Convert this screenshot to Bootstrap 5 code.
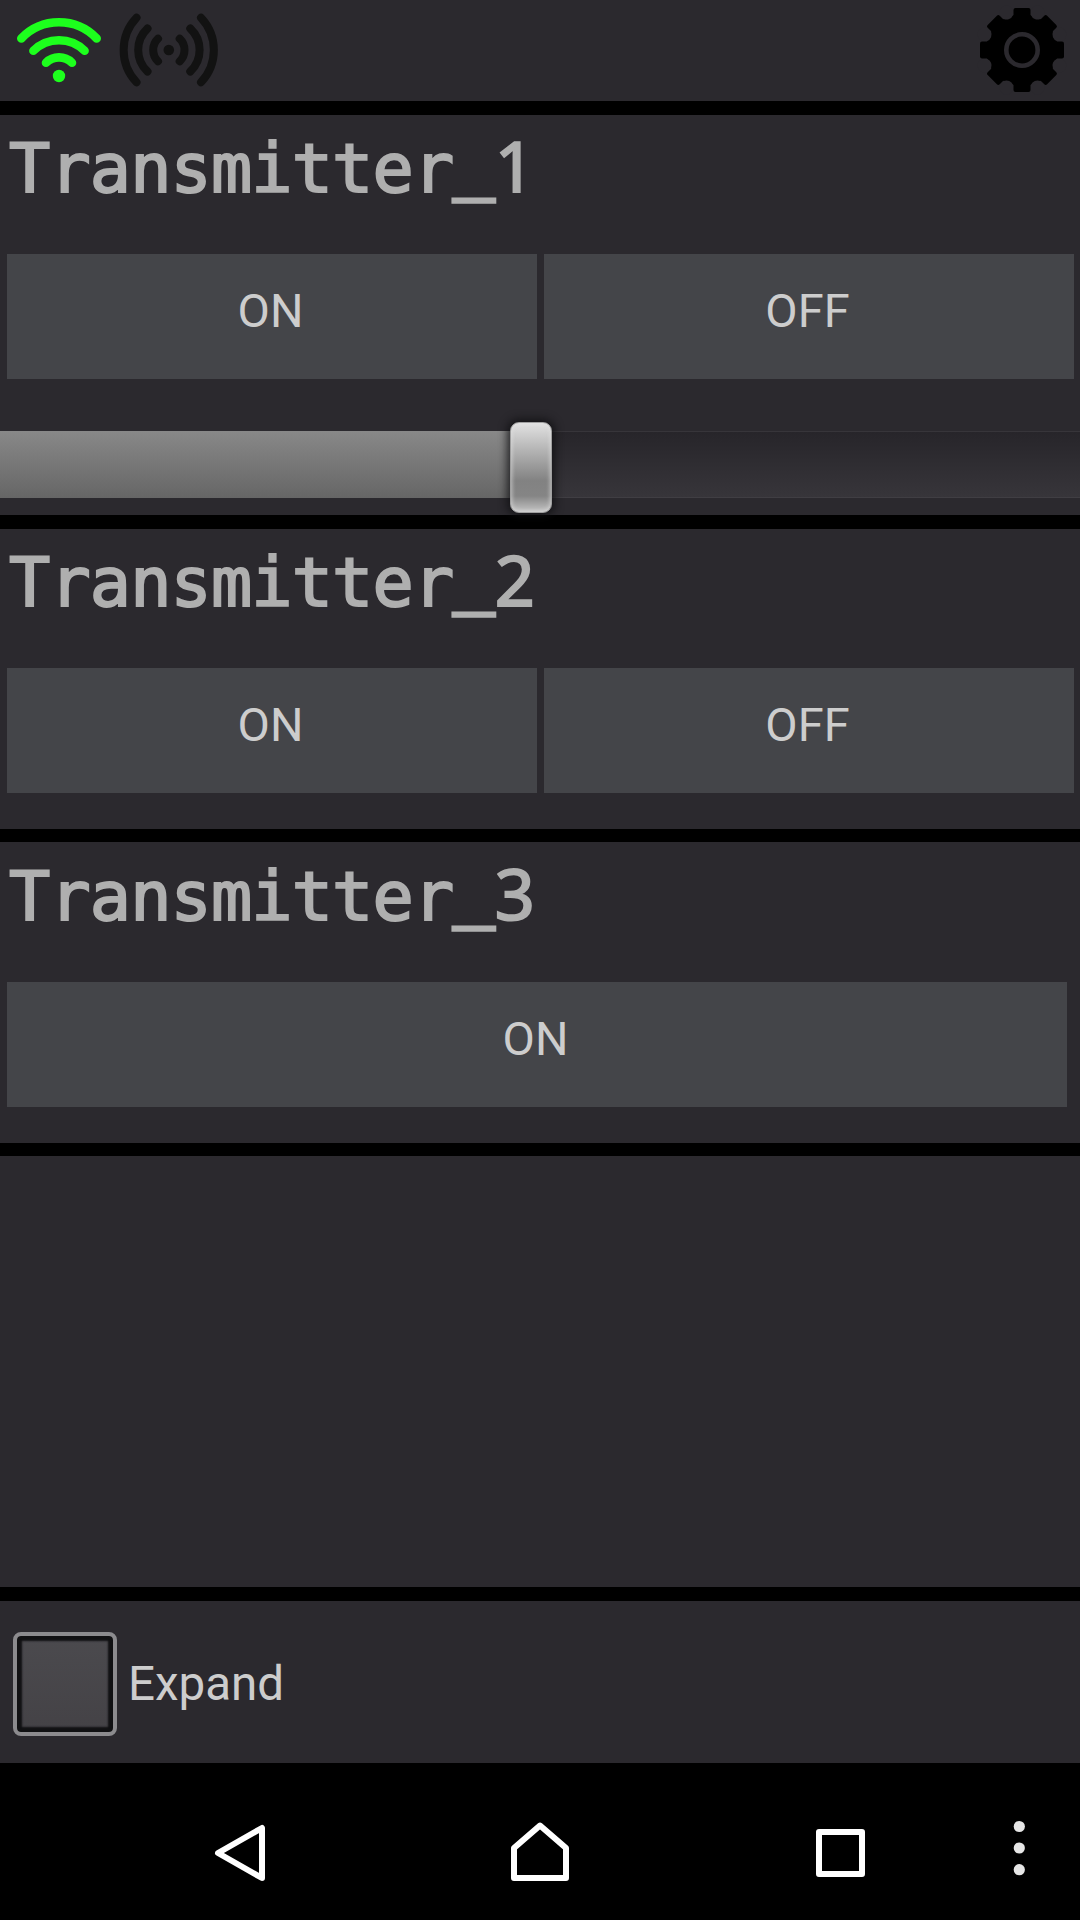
<!DOCTYPE html>
<html lang="en">
<head>
<meta charset="utf-8">
<meta name="viewport" content="width=device-width, initial-scale=1">
<title>Transmitters</title>
<link href="https://cdn.jsdelivr.net/npm/bootstrap@5.3.0/dist/css/bootstrap.min.css" rel="stylesheet">
<style>
  body { background: #000; font-family: Roboto, "Liberation Sans", sans-serif; color: #cdcdcd; }
  .screen { width: 1080px; height: 1920px; }
  .pane { background: #2b292e; flex: none; margin-bottom: 14px; }
  .topbar { height: 101px; }
  .unit { height: 300px; }
  .unit-dim { height: 400px; }
  .unit-last { height: 301px; margin-top: -1px; margin-bottom: 13px; }
  .blank { height: 431px; }
  .unit-name { height: 139px; padding: 19px 0 0 9px; margin: 0; font: 400 68.5px/68px "DejaVu Sans Mono", monospace; letter-spacing: -.85px;
    color: #afafaf; -webkit-text-stroke: 2px #afafaf; white-space: nowrap; }
  .unit-last .unit-name { height: 140px; padding-top: 20px; }
  .unit-name .us { display: inline-block; vertical-align: 6px; line-height: 1px; -webkit-text-stroke-width: 3.6px; }
  .unit-name .dg { font-family: "Noto Sans", sans-serif; font-size: 70px; font-weight: 400; line-height: 1px; padding-left: 1px; }
  .keys { padding: 0 6px 0 7px; gap: 7px; }
  .keys-wide { padding-right: 13px; }
  .key { flex: 1 1 0; height: 125px; border: 0; border-radius: 0; background: #444549; color: #cdcdcd; font-size: 47px; line-height: 56px; padding: 2px 3px 13px 0; }
  .track { height: 67px; margin-top: 52px; background: linear-gradient(#27252a, #37353a); border-top: 1px solid #37353a; border-bottom: 1px solid #403e43; }
  .fill { height: 67px; margin-top: -1px; background: linear-gradient(#888, #666); }
  .thumb { left: 510px; top: -10px; width: 42px; height: 91px; border-radius: 9px; border: 1px solid #a0a0a0;
    background: linear-gradient(#e2e2e2, #b5b5b5 30%, #828282 65%, #858585 82%, #c5c5c5);
    box-shadow: inset 0 0 4px 1px rgba(225,225,225,.65), 0 0 9px 3px rgba(15,15,17,.8); }
  .foot { height: 162px; padding-left: 13px; margin: 0; }
  .tick { appearance: none; width: 104px; height: 104px; margin: 4px 11px 0 0; border: 4px solid #8c8b8e; border-radius: 8px;
    background: linear-gradient(#4b4a4e, #444246); box-shadow: inset 0 0 2px 5px #111113; }
  .foot-label { font-size: 47.5px; line-height: 56px; padding-top: 4px; }
  .sysnav { height: 157px; }
</style>
</head>
<body>
<main class="screen d-flex flex-column overflow-hidden">
  <header class="pane topbar d-flex justify-content-between">
    <svg width="240" height="101" fill="none" stroke-linecap="round" aria-label="Connection status">
      <g stroke="#1dff1d" stroke-width="8.6">
        <path d="M21.3 38.5A52 52 0 0 1 96.7 38.5M33.4 50.7A36.5 36.5 0 0 1 84.6 50.7M46 62.7A18.5 18.5 0 0 1 72 62.7"/>
        <circle cx="59" cy="76" r="6.2" fill="#1dff1d" stroke="none"/>
      </g>
      <g stroke="#121212" stroke-width="8">
        <path d="M136.500 17.700A47 47 0 0 0 136.500 82.300M147.500 28.500A29.500 29.500 0 0 0 147.500 71.500M158 38.700A15.700 15.700 0 0 0 158 61.300"/>
        <path d="M201 17.700A47 47 0 0 1 201 82.300M190.300 28.500A29.500 29.500 0 0 1 190.300 71.500M179.700 38.700A15.700 15.700 0 0 1 179.700 61.300"/>
        <circle cx="168.800" cy="50" r="5.300" fill="#121212" stroke="none"/>
      </g>
    </svg>
    <svg width="116" height="101" viewBox="-58 -50 116 101" aria-label="Settings">
      <defs>
        <rect id="tooth" x="-8.500" y="-42" width="17" height="30" rx="2"/>
        <circle id="notch" cx="0" cy="-40.500" r="7"/>
      </defs>
      <circle r="36"/>
      <g fill="#2b292e">
        <use href="#notch" transform="rotate(22.5)"/><use href="#notch" transform="rotate(67.5)"/>
        <use href="#notch" transform="rotate(112.5)"/><use href="#notch" transform="rotate(157.5)"/>
        <use href="#notch" transform="rotate(202.5)"/><use href="#notch" transform="rotate(247.5)"/>
        <use href="#notch" transform="rotate(292.5)"/><use href="#notch" transform="rotate(337.5)"/>
      </g>
      <use href="#tooth"/><use href="#tooth" transform="rotate(45)"/><use href="#tooth" transform="rotate(90)"/>
      <use href="#tooth" transform="rotate(135)"/><use href="#tooth" transform="rotate(180)"/><use href="#tooth" transform="rotate(225)"/>
      <use href="#tooth" transform="rotate(270)"/><use href="#tooth" transform="rotate(315)"/>
      <circle r="15.700" fill="none" stroke="#2b292e" stroke-width="4.600"/>
    </svg>
  </header>

  <section class="pane unit-dim">
    <h1 class="unit-name">Transmitter<span class="us">_</span><span class="dg">1</span></h1>
    <div class="keys d-flex">
      <button class="btn key">ON</button>
      <button class="btn key">OFF</button>
    </div>
    <div class="track position-relative">
      <div class="fill" style="width:49%"></div>
      <div class="thumb position-absolute"></div>
    </div>
  </section>

  <section class="pane unit">
    <h1 class="unit-name">Transmitter<span class="us">_</span><span class="dg">2</span></h1>
    <div class="keys d-flex">
      <button class="btn key">ON</button>
      <button class="btn key">OFF</button>
    </div>
  </section>

  <section class="pane unit-last">
    <h1 class="unit-name">Transmitter<span class="us">_</span><span class="dg">3</span></h1>
    <div class="keys keys-wide d-flex">
      <button class="btn key">ON</button>
    </div>
  </section>

  <section class="pane blank"></section>

  <label class="pane foot d-flex align-items-center">
    <input class="tick" type="checkbox">
    <span class="foot-label">Expand</span>
  </label>

  <nav class="sysnav">
    <svg class="d-block" width="1080" height="157" viewBox="0 1763 1080 157" fill="none" stroke="#fff" stroke-width="6" stroke-linejoin="round">
      <path d="M262 1828V1878L218 1853Z"/>
      <path d="M540 1825.500L566 1848V1878H514V1848Z"/>
      <rect x="819" y="1832" width="43" height="42"/>
      <g fill="#e6e6e6" stroke="none"><circle cx="1019.300" cy="1826.500" r="5.600"/><circle cx="1019.300" cy="1848" r="5.600"/><circle cx="1019.300" cy="1869.700" r="5.600"/></g>
    </svg>
  </nav>
</main>
<script src="https://cdn.jsdelivr.net/npm/bootstrap@5.3.0/dist/js/bootstrap.bundle.min.js"></script>
</body>
</html>
